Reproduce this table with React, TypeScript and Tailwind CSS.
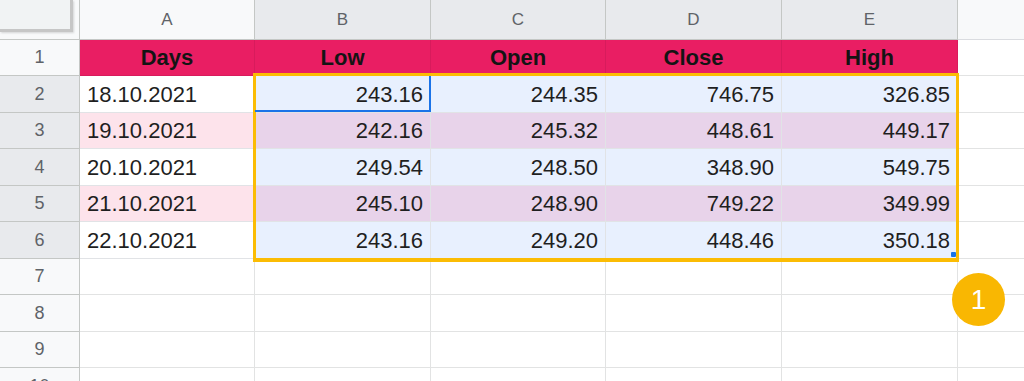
import React from 'react';

const COLS = ['A', 'B', 'C', 'D', 'E'];
const HEADERS = ['Days', 'Low', 'Open', 'Close', 'High'];
const COL_W = ['w-[175px]', 'w-[176px]', 'w-[175px]', 'w-[176px]', 'w-[176px]'];

const DATA = [
  ['18.10.2021', '243.16', '244.35', '746.75', '326.85'],
  ['19.10.2021', '242.16', '245.32', '448.61', '449.17'],
  ['20.10.2021', '249.54', '248.50', '348.90', '549.75'],
  ['21.10.2021', '245.10', '248.90', '749.22', '349.99'],
  ['22.10.2021', '243.16', '249.20', '448.46', '350.18'],
];

// row heights alternate so the grid lines land where the screenshot has them
const rowH = (n: number) => (n % 2 === 0 ? 'h-[37px]' : 'h-[36px]');

function RowHead({ n, selected }: { n: number; selected?: boolean }) {
  return (
    <div
      className={`w-[80px] shrink-0 flex items-center justify-center border-r border-b border-[#c4c7c5] text-[18px] text-[#5f6368] ${
        selected ? 'bg-[#e8eaed]' : 'bg-[#f8f9fa]'
      }`}
    >
      {n}
    </div>
  );
}

function App() {
  return (
    <div
      className="relative w-[1024px] h-[381px] overflow-hidden bg-white"
      style={{ fontFamily: '"Liberation Sans", Arial, sans-serif' }}
    >
      {/* column letters */}
      <div className="flex h-[40px]">
        <div className="w-[80px] shrink-0 bg-[#f8f9fa] border-r border-b border-[#c4c7c5]">
          <div className="w-[73px] h-[32px] bg-[#f1f3f4] border-r-[3px] border-b-[3px] border-[#c6c6c6] shadow-[1px_1px_2px_rgba(0,0,0,0.15)]" />
        </div>
        {COLS.map((c, i) => (
          <div
            key={c}
            className={`${COL_W[i]} shrink-0 flex items-center justify-center border-r border-b border-[#c4c7c5] text-[17px] text-[#5f6368] ${
              i === 0 ? 'bg-[#f8f9fa]' : 'bg-[#e8eaed]'
            }`}
          >
            {c}
          </div>
        ))}
        <div className="flex-1 bg-[#f8f9fa] border-b border-[#dadce0]" />
      </div>

      {/* header row */}
      <div className="flex h-[36px]">
        <RowHead n={1} />
        {HEADERS.map((h, i) => (
          <div
            key={h}
            className={`${COL_W[i]} shrink-0 flex items-center justify-center bg-[#e91e63] border-r border-b border-[#d81b5c] text-[22px] font-bold text-[#141414]`}
          >
            {h}
          </div>
        ))}
        <div className="flex-1 border-b border-[#e2e3e3]" />
      </div>

      {/* data rows */}
      {DATA.map((row, r) => {
        const odd = r % 2 === 1;
        return (
          <div key={r} className={`flex ${rowH(r)}`}>
            <RowHead n={r + 2} selected />
            {row.map((v, i) => {
              let bg = 'bg-white';
              if (i === 0) bg = odd ? 'bg-[#fde3eb]' : 'bg-white';
              else bg = odd ? 'bg-[#e8d3ea]' : 'bg-[#e8f0fe]';
              return (
                <div
                  key={i}
                  className={`${COL_W[i]} shrink-0 flex items-center border-r border-b border-[#e1e3e6] text-[22px] text-[#1f1f1f] ${bg} ${
                    i === 0 ? 'justify-start pl-[7px]' : 'justify-end pr-[7px]'
                  }`}
                >
                  {v}
                </div>
              );
            })}
            <div className="flex-1 border-b border-[#e2e3e3]" />
          </div>
        );
      })}

      {/* empty rows */}
      {[7, 8, 9, 10].map((n, r) => (
        <div key={n} className={`flex ${rowH(r + 1)}`}>
          <RowHead n={n} />
          {COLS.map((c, i) => (
            <div key={c} className={`${COL_W[i]} shrink-0 border-r border-b border-[#e2e3e3]`} />
          ))}
          <div className="flex-1 border-b border-[#e2e3e3]" />
        </div>
      ))}

      {/* selection range */}
      <div className="absolute left-[253px] top-[73px] w-[706px] h-[189px] border-[3px] border-b-4 border-[#fbbc04] pointer-events-none" />
      {/* active cell */}
      <div className="absolute left-[255px] top-[76px] w-[176px] h-[36px] border-r-2 border-b-2 border-[#1a73e8] pointer-events-none" />
      {/* fill handle */}
      <div className="absolute left-[951px] top-[252px] w-[5px] h-[5px] rounded-[1px] bg-[#1a73e8]" />

      {/* step badge */}
      <div className="absolute left-[952px] top-[273px] w-[53px] h-[53px] rounded-full bg-[#f9b702] flex items-center justify-center text-white text-[28px]">
        1
      </div>
    </div>
  );
}

export default App;
